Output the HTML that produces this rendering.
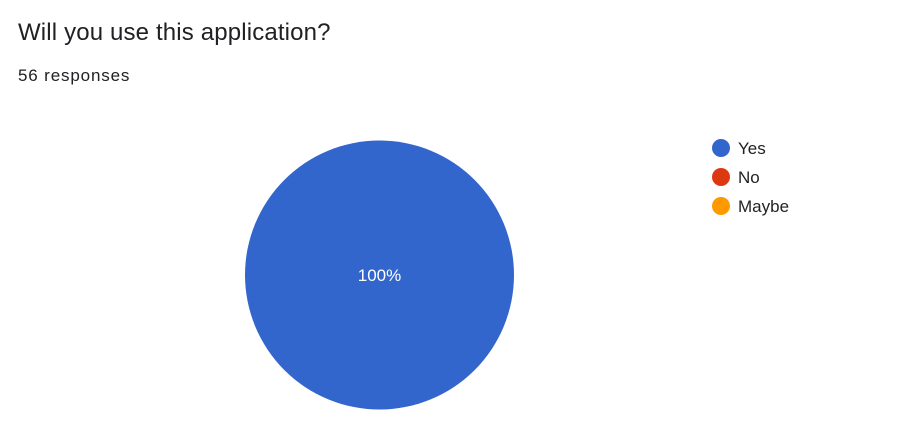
<!DOCTYPE html>
<html><head><style>
body{margin:0;width:909px;height:439px;background:#fff;overflow:hidden;font-family:"Liberation Sans",sans-serif;position:relative}
.t{position:absolute;left:18px;top:19px;font-size:24px;color:#202124;letter-spacing:0.15px}
.r{position:absolute;left:18px;top:66px;font-size:17px;color:#202124;letter-spacing:0.85px}
.lg{position:absolute;left:712px;font-size:17px;color:#222}
.lg span{display:inline-block;width:18px;height:18px;border-radius:50%;vertical-align:middle;margin-right:8px;position:relative;top:-2px}
</style></head><body>
<div class="t">Will you use this application?</div>
<div class="r">56 responses</div>
<svg style="position:absolute;left:0;top:0" width="909" height="439">
<circle cx="379.5" cy="275" r="134.5" fill="#3366cc"/>
<text x="379.5" y="281" text-anchor="middle" fill="#fff" font-size="17" font-family="Liberation Sans">100%</text>
</svg>
<div class="lg" style="top:139px"><span style="background:#3366cc"></span>Yes</div>
<div class="lg" style="top:168px"><span style="background:#dc3912"></span>No</div>
<div class="lg" style="top:197px"><span style="background:#ff9900"></span>Maybe</div>
</body></html>
